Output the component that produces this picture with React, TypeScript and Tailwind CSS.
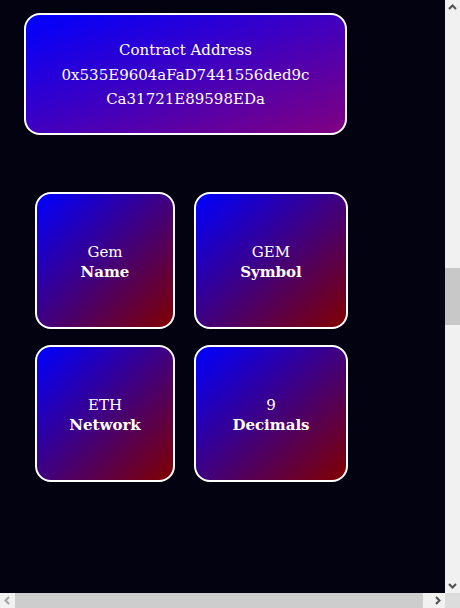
const details = [
  { value: 'Gem', label: 'Name', width: 'w-[140px]' },
  { value: 'GEM', label: 'Symbol', width: 'w-[154px]' },
  { value: 'ETH', label: 'Network', width: 'w-[140px]' },
  { value: '9', label: 'Decimals', width: 'w-[154px]' },
];

const InfoCard = ({ value, label, width }: { value: string; label: string; width: string }) => {
  return (
    <div
      className={`${width} flex h-[137px] shrink-0 flex-col items-center justify-center rounded-[16px] border-2 border-white bg-linear-to-br/srgb from-[#0000ff] to-[#800000] pt-[3px] text-center leading-[20px] text-white`}
    >
      <span>{value}</span>
      <span className="font-bold">{label}</span>
    </div>
  );
};

// chevron used for the scrollbar buttons; rotation picks the direction
const Chevron = ({ rotate, color }: { rotate: string; color: string }) => (
  <svg width="9" height="9" viewBox="0 0 9 9" className={rotate}>
    <path d="M1 6 L4.5 2.5 L8 6" fill="none" stroke={color} strokeWidth="2" />
  </svg>
);

export default function App() {
  return (
    <div className="flex h-[608px] w-[460px] flex-col font-['DejaVu_Serif',serif] text-[15px]">
      <div className="flex h-[593px]">
        <main className="w-[445px] overflow-hidden bg-[#020211] pt-[13px]">
          <div className="ml-[24px] flex h-[122px] w-[323px] flex-col items-center justify-center rounded-[16px] border-2 border-white bg-linear-to-br/srgb from-[#0000ff] to-[#800080] px-6 pt-[2px] text-center leading-[24.5px] text-white">
            <span>Contract Address</span>
            <span>0x535E9604aFaD7441556ded9c</span>
            <span>Ca31721E89598EDa</span>
          </div>
          <div className="ml-[35px] mt-[57px] grid w-fit grid-cols-[140px_154px] gap-x-[19px] gap-y-[16px]">
            {details.map((d) => (
              <InfoCard key={d.label} {...d} />
            ))}
          </div>
        </main>
        <div className="flex w-[15px] flex-col bg-[#f1f1f1]">
          <div className="flex h-[15px] items-center justify-center">
            <Chevron rotate="" color="#505050" />
          </div>
          <div className="flex-1 pt-[253px]">
            <div className="h-[57px] bg-[#c8c8c8]" />
          </div>
          <div className="flex h-[15px] items-center justify-center">
            <Chevron rotate="rotate-180" color="#505050" />
          </div>
        </div>
      </div>
      <div className="flex h-[15px] bg-[#f1f1f1]">
        <div className="flex w-[15px] items-center justify-center">
          <Chevron rotate="-rotate-90" color="#a3a3a3" />
        </div>
        <div className="flex-1">
          <div className="h-full w-[408px] bg-[#cdcdcd]" />
        </div>
        <div className="flex w-[15px] items-center justify-center">
          <Chevron rotate="rotate-90" color="#505050" />
        </div>
        <div className="w-[15px] bg-[#dcdcdc]" />
      </div>
    </div>
  );
}
